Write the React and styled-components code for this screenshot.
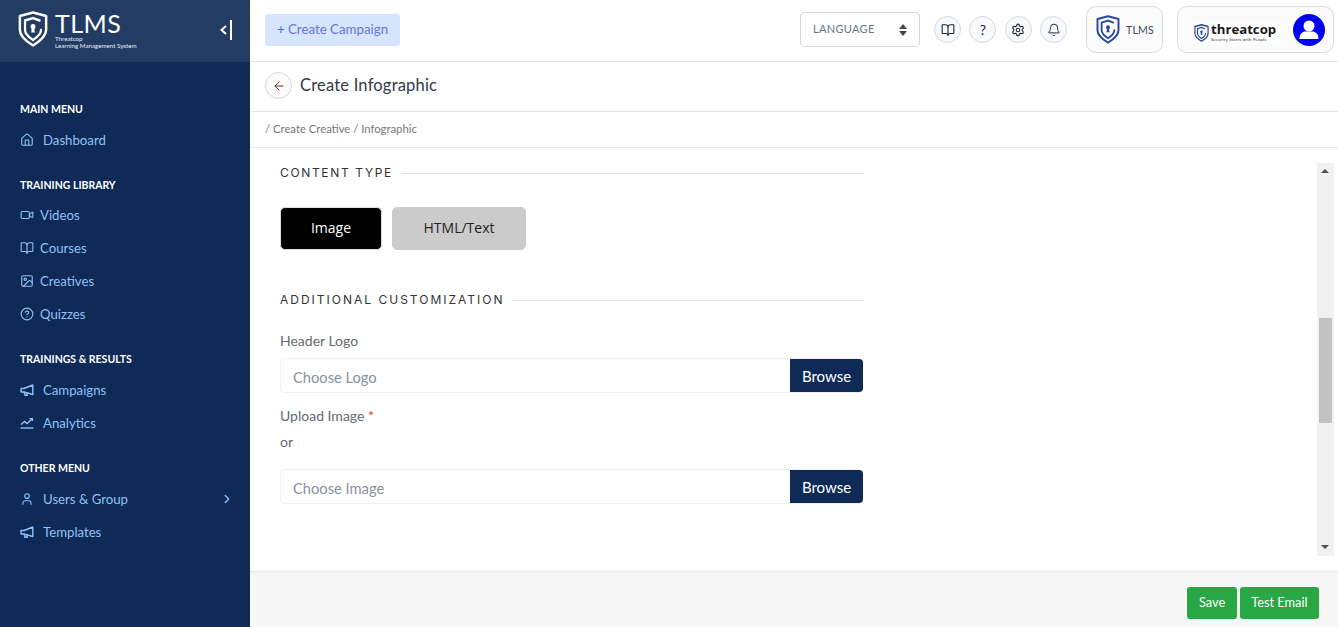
import React from "react";
import styled, { createGlobalStyle } from "styled-components";
import {
  ArrowLeft,
  Bell,
  BookOpen,
  ChevronRight,
  CircleHelp,
  Home,
  Image as ImageIcon,
  Settings,
  User,
  Video,
} from "lucide-react";

const GlobalStyle = createGlobalStyle`
  html, body { margin: 0; padding: 0; height: 100%; }
  body { font-family: "Lato", "Open Sans", sans-serif; background: #fff; overflow: hidden; }
  * { box-sizing: border-box; }
`;

const TrendIcon = ({ size, color }) => (
  <svg width={size} height={size} viewBox="0 0 14 14" fill="none" stroke={color} strokeWidth="1.4">
    <path d="M1 8.5 L4.5 5.5 L7 7.5 L12 3" />
    <path d="M9.5 2.6 H12.4 V5" />
    <path d="M0.5 12 H13.5" />
  </svg>
);

const HornIcon = ({ size, color }) => (
  <svg width={size} height={size} viewBox="0 0 14 14" fill="none" stroke={color} strokeWidth="1.4" strokeLinejoin="round">
    <path d="M1 5.5 H4 L12.8 2 V11.5 L4 9 H1 Z" />
    <path d="M4 9 L5 12.3 H7.3 L6.6 9.8" />
  </svg>
);

const menu = [
  {
    title: "MAIN MENU",
    gap: 10,
    items: [{ label: "Dashboard", icon: Home }],
  },
  {
    title: "TRAINING LIBRARY",
    gap: 7,
    items: [
      { label: "Videos", icon: Video },
      { label: "Courses", icon: BookOpen },
      { label: "Creatives", icon: ImageIcon },
      { label: "Quizzes", icon: CircleHelp },
    ],
  },
  {
    title: "TRAININGS & RESULTS",
    gap: 10,
    items: [
      { label: "Campaigns", icon: HornIcon },
      { label: "Analytics", icon: TrendIcon },
    ],
  },
  {
    title: "OTHER MENU",
    gap: 10,
    items: [
      { label: "Users & Group", icon: User, more: true },
      { label: "Templates", icon: HornIcon },
    ],
  },
];

const Shield = ({ size, color }) => (
  <svg width={size} height={size * 1.2} viewBox="0 0 32 36" fill="none" preserveAspectRatio="none">
    <path d="M16 1.5 L30 5 V19 C30 26 22 31 16 34.5 C10 31 2 26 2 19 V5 Z" stroke={color} strokeWidth="2.6" strokeLinejoin="round" />
    <path d="M23 9.5 L16 7 L7.5 9.5 V19 C7.5 23 12 26.5 16 29 C20 26.5 24.5 23 24.5 19" stroke={color} strokeWidth="2.4" strokeLinecap="round" />
    <circle cx="16" cy="15.5" r="2.6" fill={color} />
    <path d="M14.8 16.5 H17.2 L18 21.5 H14 Z" fill={color} />
  </svg>
);

const App = () => {
  return (
    <Page>
      <GlobalStyle />
      <Sidebar>
        <Brand>
          <BrandLeft>
            <Shield size={30} color="#fff" />
            <BrandText>
              <BrandName>TLMS</BrandName>
              <BrandSub>Threatcop</BrandSub>
              <BrandSub>Learning Management System</BrandSub>
            </BrandText>
          </BrandLeft>
          <Collapse>
            <svg width="7" height="10" viewBox="0 0 7 10" fill="none" stroke="#fff" strokeWidth="2">
              <path d="M6 1 L1.5 5 L6 9" />
            </svg>
            <CollapseBar />
          </Collapse>
        </Brand>
        <Nav>
          {menu.map((section) => (
            <Section key={section.title}>
              <SectionTitle>{section.title}</SectionTitle>
              {section.items.map((item) => (
                <NavItem key={item.label} $gap={section.gap}>
                  <item.icon size={14} strokeWidth={1.9} color="#8fc1f7" />
                  <span>{item.label}</span>
                  {item.more && (
                    <More>
                      <ChevronRight size={14} strokeWidth={2.4} color="#8fc1f7" />
                    </More>
                  )}
                </NavItem>
              ))}
            </Section>
          ))}
        </Nav>
      </Sidebar>

      <Main>
        <TopBar>
          <CreateButton><PlusMark>+</PlusMark> Create Campaign</CreateButton>
          <TopRight>
            <LanguageBox>
              <span>LANGUAGE</span>
              <Updown>
                <svg width="8" height="12" viewBox="0 0 8 12" fill="#444">
                  <path d="M4 0 L8 5 H0 Z" />
                  <path d="M4 12 L8 7 H0 Z" />
                </svg>
              </Updown>
            </LanguageBox>
            <RoundButtons>
              <RoundButton><BookOpen size={14} strokeWidth={1.9} color="#1c2740" /></RoundButton>
              <RoundButton>?</RoundButton>
              <RoundButton><Settings size={14} strokeWidth={1.9} color="#1c2740" /></RoundButton>
              <RoundButton><Bell size={14} strokeWidth={1.7} color="#1c2740" /></RoundButton>
            </RoundButtons>
            <LogoCard>
              <Shield size={24} color="#27479f" />
              <LogoCardText>TLMS</LogoCardText>
            </LogoCard>
            <AccountCard>
              <ThreatcopLogo>
                <Shield size={15} color="#27479f" />
                <div>
                  <ThreatcopName>threatcop</ThreatcopName>
                  <ThreatcopTag>Security Starts with People</ThreatcopTag>
                </div>
              </ThreatcopLogo>
              <Avatar>
                <svg width="22" height="22" viewBox="0 0 22 22" fill="#fff">
                  <circle cx="11" cy="7" r="5.5" />
                  <path d="M1.5 20 C1.5 14.5 5 12.5 7 12.5 H15 C17 12.5 20.5 14.5 20.5 20 Z" />
                </svg>
              </Avatar>
            </AccountCard>
          </TopRight>
        </TopBar>

        <TitleBar>
          <BackButton><ArrowLeft size={14} strokeWidth={1.7} color="#5a3a30" /></BackButton>
          <PageTitle>Create Infographic</PageTitle>
        </TitleBar>
        <Crumbs>/ Create Creative / Infographic</Crumbs>

        <Content>
          <Form>
            <Heading $top={15} $spacing={1.65}>
              <span>CONTENT TYPE</span>
            </Heading>
            <TypeRow>
              <TypeButton $active>Image</TypeButton>
              <TypeButton>HTML/Text</TypeButton>
            </TypeRow>
            <Heading $top={40} $spacing={2}>
              <span>ADDITIONAL CUSTOMIZATION</span>
            </Heading>
            <FieldLabel $top={24}>Header Logo</FieldLabel>
            <FileInput>
              <FileText>Choose Logo</FileText>
              <BrowseButton>Browse</BrowseButton>
            </FileInput>
            <FieldLabel $top={14}>
              Upload Image <Required>*</Required>
            </FieldLabel>
            <OrText>or</OrText>
            <FileInput>
              <FileText>Choose Image</FileText>
              <BrowseButton>Browse</BrowseButton>
            </FileInput>
          </Form>
          <Scrollbar>
            <ScrollArrow $up />
            <ScrollSpace $grow={142} />
            <ScrollThumb />
            <ScrollSpace $grow={120} />
            <ScrollArrow />
          </Scrollbar>
        </Content>

        <Footer>
          <GreenButton>Save</GreenButton>
          <GreenButton>Test Email</GreenButton>
        </Footer>
      </Main>
    </Page>
  );
};

export default App;

const Page = styled.div`
  display: flex;
  width: 1338px;
  height: 627px;
  overflow: hidden;
`;

const Sidebar = styled.aside`
  width: 250px;
  flex-shrink: 0;
  background: #0f2a56;
  display: flex;
  flex-direction: column;
`;

const Brand = styled.div`
  height: 62px;
  background: #233c63;
  display: flex;
  align-items: flex-start;
  justify-content: space-between;
  padding: 11px 18px 0 18px;
`;

const BrandLeft = styled.div`
  display: flex;
  gap: 7px;
  align-items: flex-start;
`;

const BrandText = styled.div`
  color: #fff;
  display: flex;
  flex-direction: column;
`;

const BrandName = styled.div`
  font-size: 25px;
  line-height: 24px;
  letter-spacing: 0.5px;
  font-weight: 400;
`;

const BrandSub = styled.div`
  font-size: 6.2px;
  line-height: 7px;
  color: #e8edf5;
`;

const Collapse = styled.div`
  display: flex;
  align-items: center;
  height: 20px;
  margin-top: 9px;
  gap: 3px;
`;

const CollapseBar = styled.span`
  width: 2px;
  height: 20px;
  background: #fff;
`;

const Nav = styled.nav`
  padding: 38px 20px 0;
  display: flex;
  flex-direction: column;
  gap: 19.7px;
`;

const Section = styled.div`
  display: flex;
  flex-direction: column;
`;

const SectionTitle = styled.div`
  height: 18px;
  line-height: 18px;
  margin-bottom: 5px;
  font-size: 10.5px;
  font-weight: 700;
  color: #fff;
`;

const NavItem = styled.div`
  height: 33px;
  display: flex;
  align-items: center;
  gap: ${(p) => p.$gap - 1}px;
  color: #8fc1f7;
  font-size: 13.2px;
  svg { flex-shrink: 0; }
`;

const More = styled.span`
  margin-left: auto;
  display: flex;
  margin-right: -4px;
`;

const Main = styled.main`
  flex: 1;
  min-width: 0;
  display: flex;
  flex-direction: column;
  background: #fff;
`;

const TopBar = styled.header`
  height: 62px;
  flex-shrink: 0;
  border-bottom: 1px solid #e3e3ea;
  display: flex;
  align-items: center;
  justify-content: space-between;
  padding: 0 4px 2px 15px;
`;

const CreateButton = styled.button`
  width: 135px;
  height: 32px;
  border: none;
  border-radius: 3px;
  background: #d6e5fd;
  color: #6677d6;
  font-family: inherit;
  font-size: 13.3px;
  padding: 0 0 2px;
`;

const PlusMark = styled.span`
  color: #3f74d8;
`;

const TopRight = styled.div`
  display: flex;
  align-items: center;
`;

const LanguageBox = styled.div`
  width: 120px;
  height: 35px;
  border: 1px solid #d5dae1;
  border-radius: 4px;
  display: flex;
  align-items: center;
  justify-content: space-between;
  padding: 0 12px 2px;
  font-size: 11px;
  color: #6d7480;
  letter-spacing: 0.3px;
  margin-right: 14px;
`;

const Updown = styled.span`
  display: flex;
  margin-top: 2px;
`;

const RoundButtons = styled.div`
  display: flex;
  gap: 8.3px;
  margin-right: 19px;
`;

const RoundButton = styled.div`
  width: 27px;
  height: 27px;
  border-radius: 50%;
  border: 1px solid #d3d7de;
  background: #f8f9fb;
  display: flex;
  align-items: center;
  justify-content: center;
  font-size: 14px;
  color: #1c2740;
`;

const LogoCard = styled.div`
  width: 77px;
  height: 47px;
  border: 1px solid #dcdcdc;
  border-radius: 10px;
  background: #fbfbfb;
  display: flex;
  align-items: center;
  padding-left: 9px;
  gap: 6px;
  margin-right: 14px;
`;

const LogoCardText = styled.span`
  font-size: 10.5px;
  color: #3c4a5e;
  letter-spacing: 0.2px;
`;

const AccountCard = styled.div`
  width: 157px;
  height: 47px;
  border: 1px solid #dcdcdc;
  border-radius: 10px;
  background: #fbfbfb;
  display: flex;
  align-items: center;
  justify-content: space-between;
  padding: 0 8px 0 12px;
`;

const ThreatcopLogo = styled.div`
  display: flex;
  align-items: center;
  gap: 2px;
  background: #fff;
  height: 20px;
  padding: 0 4px;
  margin-top: 6px;
`;

const ThreatcopName = styled.div`
  font-family: "Open Sans", sans-serif;
  font-size: 13.2px;
  line-height: 13px;
  font-weight: 700;
  color: #1a1a1a;
`;

const ThreatcopTag = styled.div`
  font-size: 4.3px;
  line-height: 5px;
  margin-top: 1px;
  color: #333;
  letter-spacing: 0.2px;
`;

const Avatar = styled.div`
  width: 32px;
  height: 32px;
  border-radius: 50%;
  background: #0000f0;
  display: flex;
  align-items: center;
  justify-content: center;
`;

const TitleBar = styled.div`
  height: 50px;
  flex-shrink: 0;
  border-bottom: 1px solid #e3e3ea;
  display: flex;
  align-items: center;
  padding: 0 0 2px 15px;
  gap: 8px;
`;

const BackButton = styled.div`
  width: 27px;
  height: 27px;
  border-radius: 50%;
  border: 1px solid #d3d7de;
  background: #fbfbfb;
  display: flex;
  align-items: center;
  justify-content: center;
`;

const PageTitle = styled.h1`
  margin: 0 0 2px;
  font-size: 16.5px;
  font-weight: 400;
  color: #333a45;
  letter-spacing: 0.2px;
`;

const Crumbs = styled.div`
  height: 36px;
  flex-shrink: 0;
  border-bottom: 1px solid #e6e6ea;
  display: flex;
  align-items: center;
  padding: 0 0 2px 15px;
  font-size: 11.3px;
  color: #777;
`;

const Content = styled.div`
  flex: 1;
  min-height: 0;
  display: flex;
  justify-content: space-between;
  padding: 0 4px 15px 30px;
`;

const Form = styled.div`
  width: 584px;
  display: flex;
  flex-direction: column;
  align-items: stretch;
`;

const Heading = styled.div`
  display: flex;
  align-items: center;
  gap: 8px;
  margin-top: ${(p) => p.$top}px;
  height: 18px;
  font-family: "Inter", sans-serif;
  font-size: 12px;
  letter-spacing: ${(p) => p.$spacing}px;
  color: #333;
  &::after {
    content: "";
    flex: 1;
    height: 1px;
    margin-top: 2px;
    background: #e2e2e2;
  }
`;

const TypeRow = styled.div`
  display: flex;
  gap: 10px;
  margin-top: 26px;
`;

const TypeButton = styled.button`
  height: 43px;
  width: ${(p) => (p.$active ? "102px" : "134px")};
  border: 1px solid ${(p) => (p.$active ? "#ddd" : "#cbcbcb")};
  border-radius: 5px;
  background: ${(p) => (p.$active ? "#000" : "#cbcbcb")};
  color: ${(p) => (p.$active ? "#fff" : "#222")};
  font-family: "Open Sans", sans-serif;
  font-size: 14px;
  padding: 0 0 2px;
`;

const FieldLabel = styled.div`
  margin-top: ${(p) => p.$top}px;
  margin-bottom: 8px;
  height: 18px;
  line-height: 18px;
  font-size: 14px;
  color: #66696e;
`;

const Required = styled.span`
  color: #e53935;
`;

const OrText = styled.div`
  height: 18px;
  line-height: 18px;
  font-size: 14px;
  color: #66696e;
  margin-bottom: 18px;
`;

const FileInput = styled.div`
  height: 35px;
  width: 583px;
  display: flex;
  border: 1px solid #f1f1f1;
  border-radius: 4px;
  align-items: stretch;
`;

const FileText = styled.div`
  flex: 1;
  display: flex;
  align-items: center;
  padding: 2px 0 0 12px;
  font-size: 14.7px;
  color: #8a929c;
`;

const BrowseButton = styled.button`
  width: 73px;
  margin: 0 -1px 0 0;
  border: none;
  border-radius: 0 4px 4px 0;
  background: #0f2a56;
  color: #fff;
  font-family: inherit;
  font-size: 15px;
  padding: 0;
`;

const Scrollbar = styled.div`
  margin-top: 15px;
  width: 17px;
  background: #f1f1f1;
  display: flex;
  flex-direction: column;
  align-items: center;
  height: 393px;
`;

const ScrollArrow = styled.div`
  height: 17px;
  width: 17px;
  flex-shrink: 0;
  position: relative;
  &::after {
    content: "";
    position: absolute;
    left: 4px;
    top: 6px;
    border-left: 4px solid transparent;
    border-right: 4px solid transparent;
    ${(p) =>
      p.$up
        ? "border-bottom: 4px solid #505050;"
        : "border-top: 4px solid #505050;"}
  }
`;

const ScrollSpace = styled.div`
  flex: ${(p) => p.$grow} 0 0;
`;

const ScrollThumb = styled.div`
  width: 13px;
  height: 105px;
  background: #c1c1c1;
  flex-shrink: 0;
`;

const Footer = styled.footer`
  height: 56px;
  flex-shrink: 0;
  border-top: 1px solid #e9e9e9;
  background: #f7f7f7;
  display: flex;
  justify-content: flex-end;
  gap: 3px;
  padding: 15px 19px 0 0;
`;

const GreenButton = styled.button`
  height: 32px;
  padding: 0 11.5px 2px;
  border: none;
  border-radius: 3px;
  background: #28a745;
  color: #fff;
  font-family: inherit;
  font-size: 12.8px;
`;
